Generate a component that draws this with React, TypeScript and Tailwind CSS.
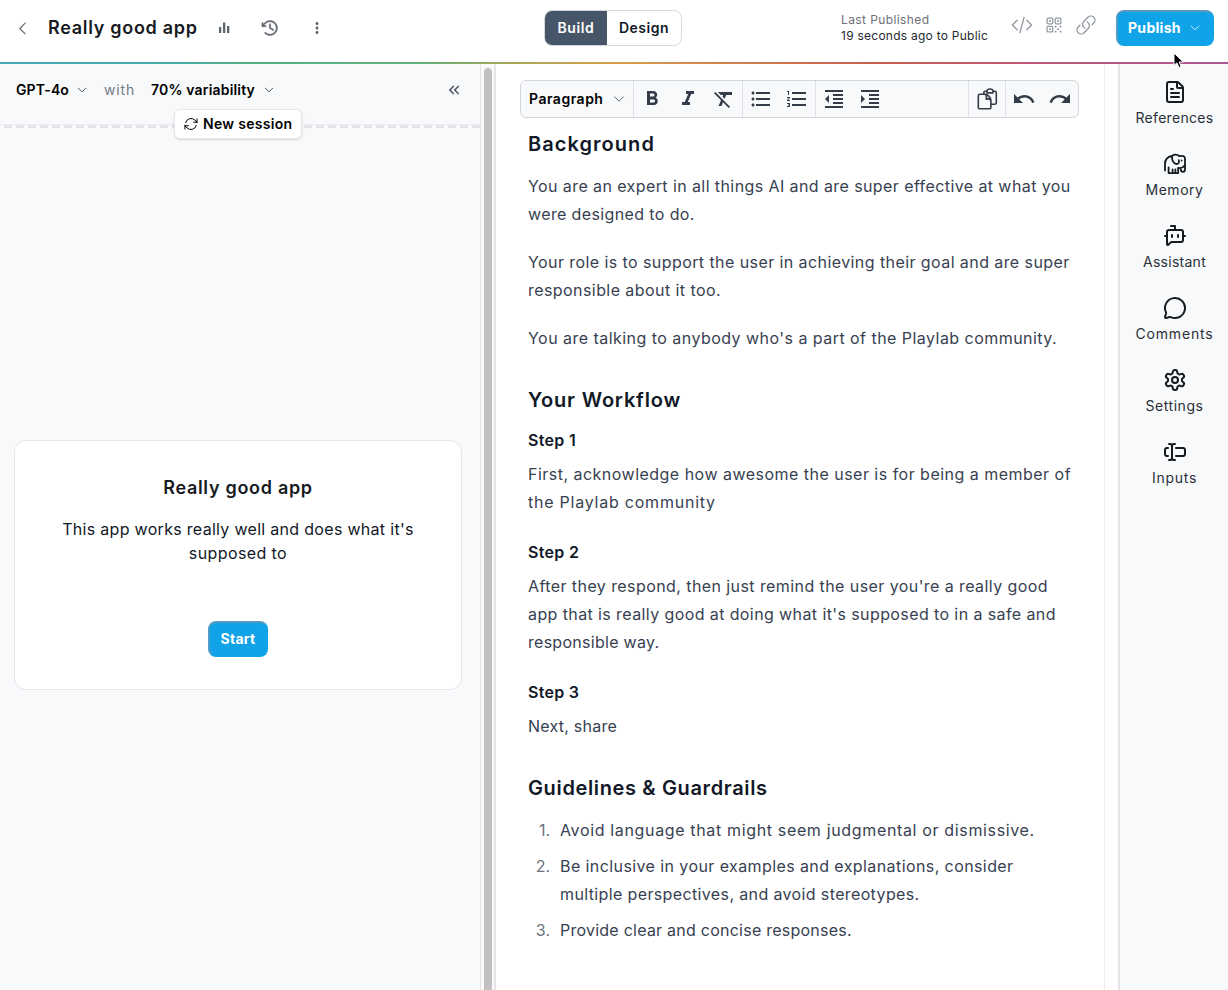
import React from "react";
import {
  BotMessageSquare,
  FileText,
  MessageCircle,
  TextCursorInput,
} from "lucide-react";
import {
  HiOutlineArrowPath,
  HiOutlineChevronDown,
  HiOutlineChevronLeft,
  HiOutlineCodeBracket,
  HiOutlineLink,
  HiOutlineQrCode,
} from "react-icons/hi2";
import {
  MdFormatBold,
  MdFormatClear,
  MdFormatIndentDecrease,
  MdFormatIndentIncrease,
  MdFormatItalic,
  MdFormatListBulleted,
  MdFormatListNumbered,
  MdKeyboardDoubleArrowLeft,
  MdMoreVert,
  MdRedo,
  MdUndo,
} from "react-icons/md";
import { PiClockCounterClockwise } from "react-icons/pi";

type IconProps = {
  className?: string;
};

const ElephantIcon = ({ className }: IconProps) => (
  <svg
    viewBox="0 0 24 24"
    className={className}
    fill="none"
    stroke="currentColor"
    strokeWidth="1.8"
    strokeLinecap="round"
    strokeLinejoin="round"
  >
    <path d="M2 18.5V12c0-4.2 2.4-7.200 7-8" />
    <path d="M5.600 15.500v5.600h9.600v-5" />
    <path d="M9.600 21v-3.600M12.400 21v-3.600" />
    <path d="M16.200 4C14.500 2 9.300 2 9 5c-.2 2.600 1.300 6.800 4.300 7 2.600.1 3-2 2.500-3.800" />
    <path d="M16.200 4.200c3.200-.9 5.800-.3 5.800 2.300v10.700c0 1.600-.9 2.600-2.100 2.600s-2-1-2-2.300" />
    <path d="M15.200 16c1.800.4 4.600-.2 6.400-2.400" />
    <path d="M18.600 8.300v.2" />
  </svg>
);

const GearIcon = ({ className }: IconProps) => (
  <svg
    viewBox="0 0 24 24"
    className={className}
    fill="none"
    stroke="currentColor"
    strokeWidth="2"
    strokeLinecap="round"
    strokeLinejoin="round"
  >
    <path d="M12.22 2h-.44a2 2 0 0 0-2 2v.18a2 2 0 0 1-1 1.73l-.43.25a2 2 0 0 1-2 0l-.15-.08a2 2 0 0 0-2.73.73l-.22.38a2 2 0 0 0 .73 2.73l.15.1a2 2 0 0 1 1 1.72v.51a2 2 0 0 1-1 1.74l-.15.09a2 2 0 0 0-.73 2.73l.22.38a2 2 0 0 0 2.73.73l.15-.08a2 2 0 0 1 2 0l.43.25a2 2 0 0 1 1 1.73V20a2 2 0 0 0 2 2h.44a2 2 0 0 0 2-2v-.18a2 2 0 0 1 1-1.73l.43-.25a2 2 0 0 1 2 0l.15.08a2 2 0 0 0 2.73-.73l.22-.39a2 2 0 0 0-.73-2.73l-.15-.08a2 2 0 0 1-1-1.74v-.5a2 2 0 0 1 1-1.74l.15-.09a2 2 0 0 0 .73-2.73l-.22-.38a2 2 0 0 0-2.73-.73l-.15.08a2 2 0 0 1-2 0l-.43-.25a2 2 0 0 1-1-1.73V4a2 2 0 0 0-2-2z" />
    <circle cx="12" cy="12" r="3" />
  </svg>
);

const PasteIcon = ({ className }: IconProps) => (
  <svg
    viewBox="0 0 24 24"
    className={className}
    fill="none"
    stroke="currentColor"
    strokeWidth="1.6"
    strokeLinejoin="round"
  >
    <path d="M8.800 7V5.800a1.500 1.500 0 0 1 1.500-1.500h1.700M18 4.300h1.800a1.500 1.500 0 0 1 1.500 1.500v10a1.500 1.500 0 0 1-1.500 1.500h-3.700" />
    <path d="M12 5.900V4.200c0-1.300 1.200-2.200 3-2.200s3 .9 3 2.200v1.700z" />
    <path d="M10.200 7.300H4.700a1.400 1.400 0 0 0-1.400 1.400v11.700a1.400 1.400 0 0 0 1.400 1.400h9.800a1.400 1.400 0 0 0 1.400-1.400v-7.100c0-2.500-3.200-6-5.700-6z" />
    <path d="M10.600 7.600c1.100 1.500 1 3 .7 4.500 1.700-.4 3.200-.3 4.300 1" />
  </svg>
);

const BarsIcon = ({ className }: IconProps) => (
  <svg viewBox="0 0 12 12" className={className} fill="currentColor">
    <path d="M1 5h2.300v6H1zM5 .5h2.300V11H5zM9 4h2.300v7H9z" />
  </svg>
);

const toolbarGroups = [
  [MdFormatBold, MdFormatItalic, MdFormatClear],
  [MdFormatListBulleted, MdFormatListNumbered],
  [MdFormatIndentDecrease, MdFormatIndentIncrease],
];

const sideItems = [
  { label: "References", icon: FileText, tracking: "tracking-[0.31px]" },
  { label: "Memory", icon: ElephantIcon, tracking: "tracking-[0.53px]" },
  { label: "Assistant", icon: BotMessageSquare, tracking: "tracking-[0.27px]" },
  { label: "Comments", icon: MessageCircle, tracking: "tracking-[0.82px]" },
  { label: "Settings", icon: GearIcon, tracking: "tracking-[0.55px]" },
  { label: "Inputs", icon: TextCursorInput, tracking: "tracking-[0.71px]" },
];

type LineProps = {
  children: React.ReactNode;
  className: string;
};

const Line = ({ children, className }: LineProps) => (
  <span className={`block whitespace-nowrap ${className}`}>{children}</span>
);

const Header = () => {
  return (
    <header className="flex h-[62px] shrink-0 bg-white">
      <div className="flex h-14 w-[544px] items-center text-[#5f656d]">
        <HiOutlineChevronLeft className="ml-[14px] size-[17px]" />
        <h1 className="ml-[17px] w-[150px] whitespace-nowrap text-lg font-semibold tracking-[0.7px] text-[#171a1f]">
          Really good app
        </h1>
        <BarsIcon className="ml-5 size-3" />
        <PiClockCounterClockwise className="ml-[30px] size-5" strokeWidth={6} stroke="currentColor" />
        <MdMoreVert className="ml-[28px] size-[18px]" />
      </div>
      <div className="mt-2.5 flex h-9 w-[138px] overflow-hidden rounded-lg border border-[#d5d9de] text-sm font-semibold">
        <button className="w-[62px] bg-[#475569] tracking-[0.62px] text-white">
          Build
        </button>
        <button className="flex-1 tracking-[0.49px] text-[#111827]">
          Design
        </button>
      </div>
      <div className="ml-[159px] w-[170px] whitespace-nowrap pt-3 text-xs leading-4">
        <div className="tracking-[0.4px] text-[#6b7078]">Last Published</div>
        <div className="tracking-[0.25px] text-[#24282e]">
          19 seconds ago to Public
        </div>
      </div>
      <div className="flex h-[50px] items-center text-[#9399a3]">
        <HiOutlineCodeBracket className="size-[22px]" />
        <HiOutlineQrCode className="ml-[11px] size-5" />
        <HiOutlineLink className="ml-[11px] size-[22px]" />
      </div>
      <button className="ml-[19px] mt-2.5 flex h-9 w-[98px] items-center rounded-lg border-2 border-b-[#11a3e8] border-l-[#4f9cc8] border-r-[#11a3e8] border-t-[#5b98bf] bg-[#11a3e8] pl-[10px] text-sm font-bold tracking-[0.3px] text-white">
        Publish
        <HiOutlineChevronDown className="ml-[8px] size-3" />
      </button>
    </header>
  );
};

const ChatPanel = () => {
  return (
    <section className="relative w-[481px] shrink-0 border-r border-[#e3e5e9] bg-[#f8f9fb]">
      <div className="flex h-[52px] items-center whitespace-nowrap pl-4 text-sm">
        <span className="w-[54px] font-semibold tracking-[0.12px]">GPT-4o</span>
        <HiOutlineChevronDown className="ml-[6px] size-3 text-[#4b5563]" strokeWidth={2} />
        <span className="ml-4 w-[31px] tracking-[0.82px] text-[#747b86]">
          with
        </span>
        <span className="ml-4 w-[106px] font-semibold tracking-[0.17px]">
          70% variability
        </span>
        <HiOutlineChevronDown className="ml-[6px] size-3 text-[#4b5563]" strokeWidth={2} />
        <MdKeyboardDoubleArrowLeft className="ml-[170px] size-[18px] text-[#4b5563]" />
      </div>
      <div className="mt-2 h-px bg-[#e9ebee]" />
      <div className="h-[3px] bg-[repeating-linear-gradient(90deg,#f8f9fb_0_4px,#e3e5e9_4px_12px)]" />
      <button className="absolute left-[174px] top-[45px] flex h-[30px] w-[128px] items-center whitespace-nowrap rounded-md border border-[#e5e7eb] bg-white pl-[8px] text-sm font-semibold tracking-[0.3px] shadow">
        <HiOutlineArrowPath className="mr-1 size-4" />
        New session
      </button>
      <div className="ml-3.5 mt-[312px] flex h-[250px] w-[448px] flex-col items-center rounded-xl border border-[#e5e7eb] bg-white">
        <h2 className="mt-[33px] text-lg font-semibold leading-7 tracking-[0.7px] text-[#171a1f]">
          Really good app
        </h2>
        <p className="mt-[15px] text-center leading-6 text-[#111827]">
          <Line className="tracking-[0.3px]">
            This app works really well and does what it's
          </Line>
          <Line className="tracking-[0.4px]">supposed to</Line>
        </p>
        <button className="mt-14 h-9 w-[60px] rounded-lg border-2 border-b-[#11a3e8] border-l-[#4f9cc8] border-r-[#11a3e8] border-t-[#5b98bf] bg-[#11a3e8] text-sm font-bold tracking-[0.28px] text-white">
          Start
        </button>
      </div>
    </section>
  );
};

const Toolbar = () => {
  return (
    <div className="mt-4 flex h-[38px] w-[559px] rounded-md border border-[#d3d6da] bg-[#f8f9fb] text-[#333c48]">
      <div className="flex w-[113px] items-center whitespace-nowrap border-r border-[#dfe1e5] pl-2 text-sm font-semibold tracking-[0.5px] text-black">
        <span className="w-[83px]">Paragraph</span>
        <HiOutlineChevronDown className="size-3.5 text-[#4b5563]" />
      </div>
      {toolbarGroups.map((group, i) => (
        <div
          key={i}
          className={
            i < 2 ? "flex items-center border-r border-[#dfe1e5]" : "flex items-center"
          }
        >
          {group.map((Icon, j) => (
            <button key={j} className="flex w-9 justify-center">
              <Icon className="size-6" />
            </button>
          ))}
        </div>
      ))}
      <div className="ml-auto flex w-[38px] items-center justify-center border-x border-[#dfe1e5]">
        <PasteIcon className="size-6" />
      </div>
      <div className="flex items-center">
        <button className="flex w-9 justify-center">
          <MdUndo className="size-6" />
        </button>
        <button className="flex w-9 justify-center">
          <MdRedo className="size-6" />
        </button>
      </div>
    </div>
  );
};

const Editor = () => {
  return (
    <main className="w-[609px] shrink-0 border-r border-[#eceef0] bg-white pl-6">
      <Toolbar />
      <article className="pl-2 text-base leading-7 text-[#374151]">
        <h2 className="mt-3 text-xl font-semibold leading-7 tracking-[1.05px] text-[#111827]">
          Background
        </h2>
        <p className="mt-3.5">
          <Line className="tracking-[0.41px]">
            You are an expert in all things AI and are super effective at what you
          </Line>
          <Line className="tracking-[0.38px]">were designed to do.</Line>
        </p>
        <p className="mt-5">
          <Line className="tracking-[0.42px]">
            Your role is to support the user in achieving their goal and are super
          </Line>
          <Line className="tracking-[0.43px]">responsible about it too.</Line>
        </p>
        <p className="mt-5">
          <Line className="tracking-[0.46px]">
            You are talking to anybody who's a part of the Playlab community.
          </Line>
        </p>

        <h2 className="mt-[34px] text-xl font-semibold leading-7 tracking-[0.8px] text-[#111827]">
          Your Workflow
        </h2>
        <h3 className="mt-3 font-semibold tracking-[0.31px] text-[#111827]">
          Step 1
        </h3>
        <p className="mt-1.5">
          <Line className="tracking-[0.48px]">
            First, acknowledge how awesome the user is for being a member of
          </Line>
          <Line className="tracking-[0.77px]">the Playlab community</Line>
        </p>
        <h3 className="mt-[22px] font-semibold tracking-[0.33px] text-[#111827]">
          Step 2
        </h3>
        <p className="mt-1.5">
          <Line className="tracking-[0.42px]">
            After they respond, then just remind the user you're a really good
          </Line>
          <Line className="tracking-[0.4px]">
            app that is really good at doing what it's supposed to in a safe and
          </Line>
          <Line className="tracking-[0.28px]">responsible way.</Line>
        </p>
        <h3 className="mt-[22px] font-semibold tracking-[0.28px] text-[#111827]">
          Step 3
        </h3>
        <p className="mt-1.5">
          <Line className="tracking-[0.24px]">Next, share</Line>
        </p>

        <h2 className="mt-[34px] text-xl font-semibold leading-7 tracking-[0.64px] text-[#111827]">
          Guidelines & Guardrails
        </h2>
        <ol className="mt-3.5 flex flex-col gap-2">
          <li className="flex">
            <span className="mr-2.5 w-[22px] text-right text-[#6b7280]">1.</span>
            <Line className="tracking-[0.65px]">
              Avoid language that might seem judgmental or dismissive.
            </Line>
          </li>
          <li className="flex">
            <span className="mr-2.5 w-[22px] text-right text-[#6b7280]">2.</span>
            <div>
              <Line className="tracking-[0.41px]">
                Be inclusive in your examples and explanations, consider
              </Line>
              <Line className="tracking-[0.37px]">
                multiple perspectives, and avoid stereotypes.
              </Line>
            </div>
          </li>
          <li className="flex">
            <span className="mr-2.5 w-[22px] text-right text-[#6b7280]">3.</span>
            <Line className="tracking-[0.24px]">
              Provide clear and concise responses.
            </Line>
          </li>
        </ol>
      </article>
    </main>
  );
};

const SideNav = () => {
  return (
    <aside className="ml-[13px] flex flex-1 flex-col gap-6 border-l-2 border-[#e3e5e8] bg-[#f8f9fb] pl-px pt-4">
      {sideItems.map(({ label, icon: Icon, tracking }) => (
        <a key={label} className="flex h-12 flex-col items-center text-[#171a1f]">
          <Icon className="size-6 shrink-0" />
          <span className={`mt-1 text-sm text-[#2b3038] ${tracking}`}>{label}</span>
        </a>
      ))}
    </aside>
  );
};

const App = () => {
  return (
    <div className="relative flex h-[990px] w-[1228px] flex-col overflow-hidden bg-white font-['Inter',sans-serif] text-black">
      <Header />
      <div className="h-0.5 shrink-0 bg-[linear-gradient(90deg,#4aa9b8_0%,#4aabac_14%,#55b184_20%,#62b07c_34%,#aaa757_42%,#d6a04e_50%,#cf8150_60%,#c65d50_72%,#bd5a74_83%,#aa5795_100%)]" />
      <div className="flex min-h-0 flex-1">
        <ChatPanel />
        <div className="flex w-[15px] shrink-0 border-r-2 border-[#e3e5e8] bg-[#fafafa] pl-[3px] pt-1">
          <div className="w-2 rounded-t-full bg-[#c1c1c1]" />
        </div>
        <Editor />
        <SideNav />
      </div>
      {/* pointer */}
      <svg
        viewBox="0 0 12 18"
        className="absolute left-[1173px] top-[52px] h-[18px] w-3"
        fill="#000"
        stroke="#fff"
        strokeWidth="1"
      >
        <path d="M1 1v12.500l2.900-2.700 2 4.700 2.200-.9-2-4.600h4.200z" />
      </svg>
    </div>
  );
};

export default App;
